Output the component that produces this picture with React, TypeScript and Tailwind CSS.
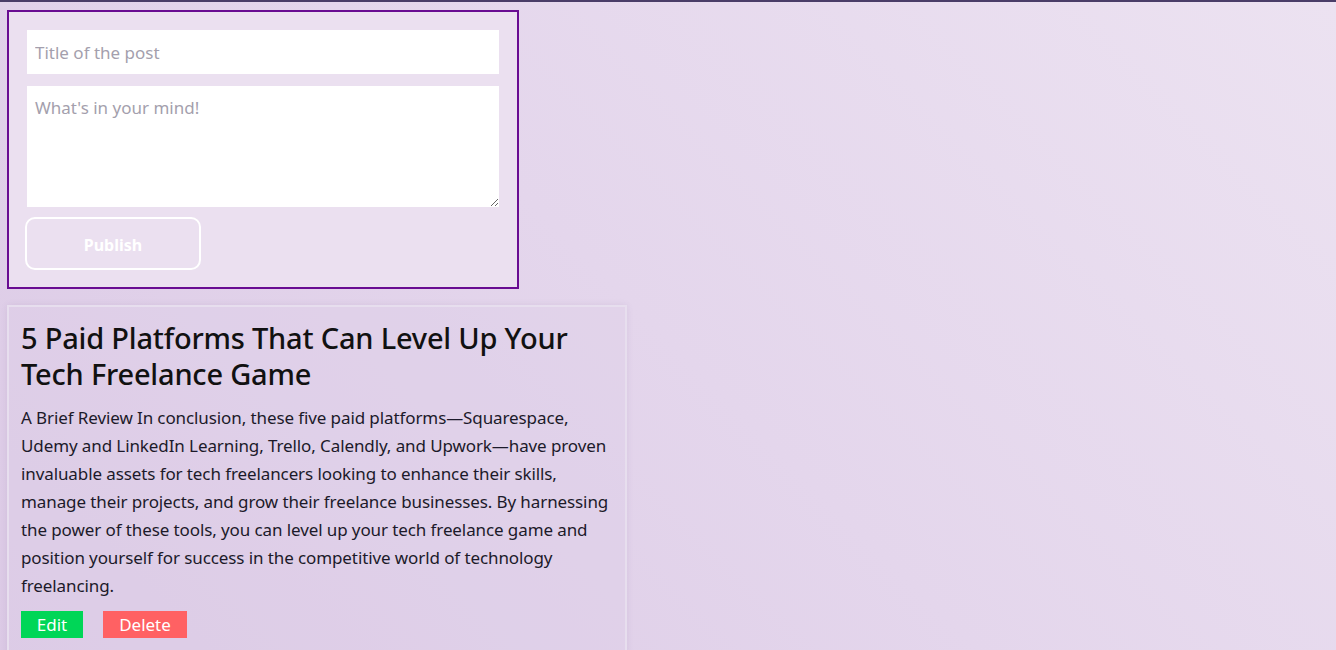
import React from "react";

export default function App() {
  return (
    <div
      className="min-h-[650px] w-full border-t-2 border-[#4a3d68] bg-[linear-gradient(45deg,#dbc9e5_0%,#e4d6ec_50%,#ece2f1_100%)] px-[7px] pt-[8px] pb-[20px]"
      style={{ fontFamily: '"Noto Sans", "Open Sans", sans-serif' }}
    >
      <div className="flex w-[512px] flex-col border-2 border-[#690c92] bg-[#ebe0f0] px-[18px] pt-[18px] pb-[17px]">
        <input
          className="h-[44px] w-full bg-white px-[8px] text-[17px] text-[#333] outline-none placeholder:text-[#a49fad]"
          placeholder="Title of the post"
        />
        <textarea
          className="mt-[12px] h-[121px] w-full resize-y bg-white px-[8px] pt-[11px] pb-[8px] text-[17px] leading-[22px] text-[#333] outline-none placeholder:text-[#a49fad]"
          placeholder="What's in your mind!"
        />
        <button className="mt-[10px] -ml-[2px] flex h-[53px] w-[176px] items-center justify-center rounded-[10px] border-2 border-white pt-[2px] text-[16px] font-bold text-white">
          Publish
        </button>
      </div>

      <div className="mt-[16px] w-[620px] border-2 border-[#e7deee] bg-[#dfd0e9]/40 px-[12px] pt-[12px] pb-[16px] shadow-[0_0_6px_rgba(120,90,150,0.12)]">
        <h2 className="pt-[1px] text-[29px] leading-[36px] font-medium tracking-[-0.2px] text-[#111]">
          5 Paid Platforms That Can Level Up Your Tech Freelance Game
        </h2>
        <p className="mt-[12px] text-[17px] leading-[28px] tracking-[-0.1px] text-[#1c1a2a]">
          A Brief Review In conclusion, these five paid platforms—Squarespace, Udemy and LinkedIn Learning, Trello, Calendly, and Upwork—have proven invaluable assets for tech freelancers looking to enhance their skills, manage their projects, and grow their freelance businesses. By harnessing the power of these tools, you can level up your tech freelance game and position yourself for success in the competitive world of technology freelancing.
        </p>
        <div className="mt-[11px] flex gap-[20px]">
          <button className="flex h-[27px] w-[62px] items-center justify-center bg-[#00d657] pt-[1px] text-[17px] text-white">
            Edit
          </button>
          <button className="flex h-[27px] w-[84px] items-center justify-center bg-[#ff6163] pt-[1px] text-[17px] text-white">
            Delete
          </button>
        </div>
      </div>
    </div>
  );
}
